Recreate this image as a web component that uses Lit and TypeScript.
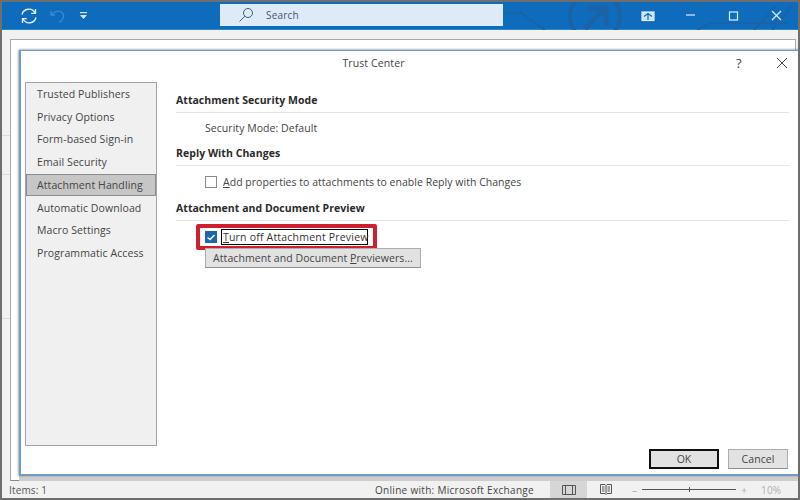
import { LitElement, html, css } from "lit";
import { customElement } from "lit/decorators.js";

const NAV = ["Trusted Publishers","Privacy Options","Form-based Sign-in","Email Security","Attachment Handling","Automatic Download","Macro Settings","Programmatic Access"];

@customElement("app-root")
export class AppRoot extends LitElement {
  static styles = css`
    :host { display: block; width: 800px; height: 500px; font-family: "Open Sans", "Noto Sans", sans-serif; color: #333; font-size: 10.5px; }
    * { box-sizing: border-box; }
    .win { position: relative; width: 800px; height: 500px; border: 2px solid #6e6e6e; display: flex; flex-direction: column; background: #f1f1f1; overflow: hidden; }
    .tb { height: 28px; background: #0f6cbd; display: flex; align-items: center; position: relative; flex: none; border-bottom: 1px solid #2a86d0; }
    .deco { position: absolute; left: 0; top: 0; }
    .qa { display: flex; align-items: center; gap: 12px; margin-left: 18px; width: 200px; position: relative; }
    .search { position: relative; width: 283px; height: 22px; background: #deeaf8; display: flex; align-items: center; padding-left: 18px; gap: 12px; color: #44566c; font-size: 10px; margin-top: -1px; letter-spacing: .2px; }
    .ctl { position: absolute; right: 0; top: 0; height: 28px; display: flex; align-items: center; }
    .ctl svg { display: block; }
    .main { flex: 1; padding: 9px 2px 0 0; min-height: 0; display: flex; }
    .rail { width: 8px; flex: none; display: flex; flex-direction: column; margin-top: -9px; }
    .rail i { display: block; flex: none; border-bottom: 1px solid #dcdcdc; }
    .doc { flex: 1; background: #fff; border: 1px solid #a8a8a8; border-bottom-color: #888; }
    .status { height: 17px; flex: none; display: flex; align-items: center; padding-left: 7px; color: #555; font-size: 10px; background: #f1f1f1; letter-spacing: .15px; }
    .items { width: 366px; }
    .online { width: 175px; color: #444; letter-spacing: .3px; }
    .view { width: 37px; height: 17px; display: flex; align-items: center; justify-content: center; }
    .view.on { background: #d6d6d6; }
    .zoom { display: flex; align-items: center; margin-left: 8px; color: #aaa; gap: 5px; }
    .track { width: 94px; height: 1px; background: #555; position: relative; }
    .tick { position: absolute; left: 47px; top: -2px; width: 1px; height: 5px; background: #555; }
    .pct { margin-left: 9px; color: #b0b0b0; }

    .dlg { position: absolute; left: 17px; top: 48px; width: 781px; height: 426px; background: #fff; border: 1px solid #6f9cc6; border-width: 1px 0 2px 2px; box-shadow: -1px 0 2px rgba(80,90,100,.4), 0 -1px 2px rgba(80,90,100,.3), 0 5px 0 #cdcdcd; display: flex; flex-direction: column; }
    .dt { height: 31px; flex: none; display: flex; align-items: center; justify-content: center; position: relative; color: #444; padding: 0 74px 7px 0; letter-spacing: .1px; }
    .help { position: absolute; left: 715px; top: 3px; font-size: 13px; color: #444; }
    .x { position: absolute; left: 755px; top: 6px; }
    .db { flex: 1; display: flex; min-height: 0; padding-left: 4px; }
    .nav { width: 132px; height: 364px; flex: none; background: #f0f0f0; border: 1px solid #a3a3a3; display: flex; flex-direction: column; }
    .nav div { height: 22.75px; display: flex; align-items: center; padding-left: 10px; color: #444; border: 1px solid transparent; letter-spacing: .1px; flex: none; }
    .nav div:first-child { margin-top: -0.5px; }
    .nav div.sel { background: #c6c6c6; border-color: #8c8c8c; }
    .pane { flex: 1; padding: 10px 11px 0 19px; min-width: 0; }
    h3 { margin: 0; font-size: 10.5px; font-weight: 700; color: #2b2b2b; height: 21px; line-height: 16px; border-bottom: 1px solid #e4e4e4; letter-spacing: .04px; }
    .t { color: #444; padding: 0 0 2px 29px; height: 32px; display: flex; align-items: center; letter-spacing: .05px; }
    .row { height: 34px; display: flex; align-items: center; padding: 0 0 3px 29px; gap: 6px; color: #444; letter-spacing: .03px; }
    .cb { width: 12px; height: 12px; border: 1px solid #8a8a8a; background: #fff; flex: none; }
    .cbon { position: relative; width: 12px; height: 12px; flex: none; background: #1c66ae; display: block; }
    .hl { position: relative; height: 26px; margin: 3px 0 0 20px; width: 181px; border: 4px solid #cf1f2e; border-radius: 2px; display: flex; align-items: center; padding-left: 5px; gap: 4px; }
    .focus { border: 1px solid #000; height: 16px; width: 147px; display: flex; align-items: center; padding-left: 1px; color: #333; letter-spacing: .2px; white-space: nowrap; }
    .btn { display: flex; align-items: center; justify-content: center; background: #e2e2e2; border: 1px solid #adadad; border-bottom-color: #8f8f8f; color: #444; letter-spacing: .07px; }
    .pv { width: 216px; height: 20px; margin: -2px 0 0 29px; position: relative; }
    .ft { height: 25px; flex: none; display: flex; justify-content: flex-end; gap: 9px; padding-right: 12px; align-items: flex-start; }
    .ok { width: 70px; height: 20px; border: 2px solid #111; }
    .cancel { width: 60px; height: 20px; }
    u { text-underline-offset: 1px; }
  `;

  render() {
    return html`<div class="win">
      <div class="tb">
        <svg class="deco" width="796" height="28" fill="none" stroke="#1b62a6" stroke-width="2">
          <path d="M502 11h17l24 17"/><circle cx="593" cy="14" r="25" stroke-width="4"/>
          <path d="M583 27l19-20M586 6h18v18" stroke-width="5"/>
          <path d="M695 28l14-7h78M752 28l22-24M770 28l20-24"/>
        </svg>
        <div class="qa">
          <svg width="18" height="18" viewBox="0 0 18 18" fill="none" stroke="#e8f2fb" stroke-width="1.3"><path d="M2 7.5A7 7 0 0 1 15 6M16 10.5A7 7 0 0 1 3 12"/><path d="M15.5 2v4.3h-4.3M2.500 16v-4.300h4.300"/></svg>
          <svg width="16" height="16" viewBox="0 0 16 16" fill="none" stroke="#3a8ad0" stroke-width="1.3"><path d="M1 3v4h4M1.500 7C4 3 9 2 12 4.500s2 7-3 10"/></svg>
          <svg style="margin-left:1px" width="9" height="9" viewBox="0 0 9 9" fill="#dbe9f6"><rect x="1" y="1" width="7" height="1.200"/><path d="M1 4h7L4.500 8z"/></svg>
        </div>
        <div class="search">
          <svg width="16" height="16" viewBox="0 0 16 16" fill="none" stroke="#3f5f80" stroke-width="1"><circle cx="10" cy="6" r="4.500"/><path d="M6.800 9.200L1.500 14.500"/></svg>
          <span>Search</span>
        </div>
        <div class="ctl">
          <svg width="796" height="28" style="position:absolute;right:0;top:0" fill="none" stroke="#dcebf8" stroke-width="1.200">
            <rect x="640" y="10" width="12" height="8.500" fill="#cfe3f5"/><path d="M642 14.500l4-3 4 3M646 12v6" stroke="#0f6cbd"/>
            <path d="M684 13h9"/><rect x="727.500" y="10" width="8" height="8"/><path d="M770 9l9 9M779 9l-9 9"/>
          </svg>
        </div>
      </div>
      <div class="main">
        <div class="rail">
          <i style="height:106px"></i><i style="height:39px"></i><i style="height:144px"></i>
        </div>
        <div class="doc"></div>
      </div>
      <div class="status">
        <span class="items">Items: 1</span>
        <span class="online">Online with: Microsoft Exchange</span>
        <span class="view on"><svg width="14" height="10" fill="none" stroke="#555"><path d="M.5.5h13v9H.5zM3.500.5v9M10.500.5v9"/></svg></span>
        <span class="view"><svg width="12" height="11" fill="none" stroke="#555"><path d="M.5.500h4.500l1 1 1-1h4.500v9H7l-1 1-1-1H.5zM6 1.500v8M2 3h2.500M2 5h2.500M2 7h2.500M7.500 3H10M7.500 5H10M7.500 7H10"/></svg></span>
        <span class="zoom"><span>–</span><span class="track"><span class="tick"></span></span><span>+</span><span class="pct">10%</span></span>
      </div>
      <div class="dlg">
        <div class="dt">Trust Center
          <span class="help">?</span>
          <svg class="x" width="12" height="12" fill="none" stroke="#444"><path d="M1 1l10 10M11 1L1 11"/></svg>
        </div>
        <div class="db">
          <div class="nav">${NAV.map((n,i)=>html`<div class=${i===4?"sel":""}>${n}</div>`)}</div>
          <div class="pane">
            <h3>Attachment Security Mode</h3>
            <div class="t">Security Mode: Default</div>
            <h3>Reply With Changes</h3>
            <div class="row"><span class="cb"></span><span><u>A</u>dd properties to attachments to enable Reply with Changes</span></div>
            <h3>Attachment and Document Preview</h3>
            <div class="hl">
              <svg class="cbon" width="12" height="12" fill="none" stroke="#fff" stroke-width="1.500"><path d="M2.500 6.500l2.500 2 4.500-4.500"/></svg>
              <span class="focus"><span><u>T</u>urn off Attachment Preview</span></span>
            </div>
            <div class="btn pv"><span>Attachment and Document <u>P</u>reviewers...</span></div>
          </div>
        </div>
        <div class="ft"><div class="btn ok">OK</div><div class="btn cancel">Cancel</div></div>
      </div>
    </div>`;
  }
}
